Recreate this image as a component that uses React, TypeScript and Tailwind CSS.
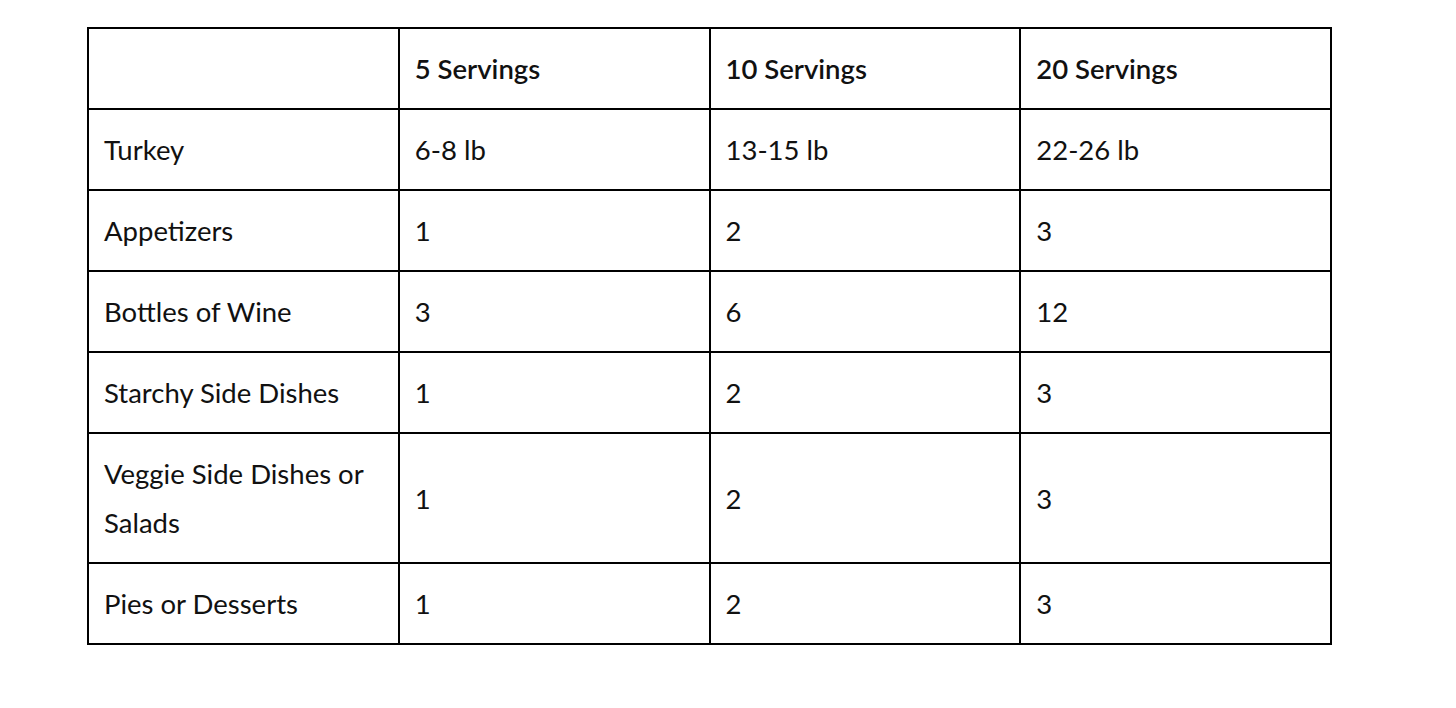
import React from 'react'

const rows: [string, string, string, string][] = [
  ['Turkey', '6-8 lb', '13-15 lb', '22-26 lb'],
  ['Appetizers', '1', '2', '3'],
  ['Bottles of Wine', '3', '6', '12'],
  ['Starchy Side Dishes', '1', '2', '3'],
  ['Veggie Side Dishes or Salads', '1', '2', '3'],
  ['Pies or Desserts', '1', '2', '3'],
]

const cell = 'border-2 border-black px-[15px] py-[15px] align-middle text-left'

export default function App() {
  return (
    <div className="min-h-[708px] bg-white pt-[27px] pl-[87px]" style={{ fontFamily: 'Lato, "Noto Sans", sans-serif' }}>
      <table className="w-[1245px] table-fixed border-collapse text-[27.5px] leading-[49px] text-[#111]">
        <thead>
          <tr>
            <th className={cell}></th>
            <th className={cell + ' font-semibold'}>5 Servings</th>
            <th className={cell + ' font-semibold'}>10 Servings</th>
            <th className={cell + ' font-semibold'}>20 Servings</th>
          </tr>
        </thead>
        <tbody>
          {rows.map((r) => (
            <tr key={r[0]}>
              {r.map((c, i) => (
                <td key={i} className={cell + ' font-normal'}>{c}</td>
              ))}
            </tr>
          ))}
        </tbody>
      </table>
    </div>
  )
}
